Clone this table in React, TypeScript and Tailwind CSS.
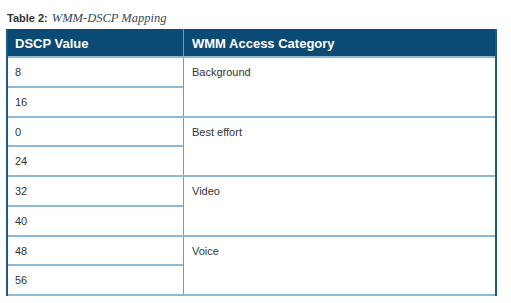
import React from "react";

const groups: { values: string[]; category: string }[] = [
  { values: ["8", "16"], category: "Background" },
  { values: ["0", "24"], category: "Best effort" },
  { values: ["32", "40"], category: "Video" },
  { values: ["48", "56"], category: "Voice" },
];

export default function App() {
  return (
    <div
      className="w-[511px] h-[303px] bg-white pl-[6px] pt-[9px]"
      style={{ fontFamily: '"Liberation Sans", Arial, sans-serif' }}
    >
      <div className="flex items-baseline h-[20px] pl-[1px]">
        <span className="text-[11px] font-bold text-[#333333]">Table 2:</span>
        <span
          className="ml-[4px] text-[12.5px] italic text-[#34485c]"
          style={{ fontFamily: '"Liberation Serif", "Times New Roman", serif' }}
        >
          WMM-DSCP Mapping
        </span>
      </div>

      <div className="w-[491px] border-x-2 border-[#1d5a86]">
        <div className="flex h-[27px] bg-[#0b4a75] text-white text-[13px] font-bold">
          <div className="w-[176px] pl-[7px] pt-[5px] border-r border-[#6a9cc4]">DSCP Value</div>
          <div className="flex-1 pl-[8px] pt-[5px]">WMM Access Category</div>
        </div>

        {groups.map((g) => (
          <div key={g.category} className="flex border-t-2 border-[#8fb7d6]">
            <div className="w-[176px] flex flex-col border-r border-[#6a9cc4]">
              <div className="h-[29.5px] pl-[7px] pt-[6px] text-[11px] text-[#333333] border-b-2 border-[#8fb7d6]">
                {g.values[0]}
              </div>
              <div className="h-[28px] pl-[7px] pt-[6px] text-[11px] text-[#333333]">
                {g.values[1]}
              </div>
            </div>
            <div className="flex-1 pl-[8px] pt-[6px] text-[11px] text-[#333333]">{g.category}</div>
          </div>
        ))}
        <div className="border-t-2 border-[#8fb7d6]" />
      </div>
    </div>
  );
}
